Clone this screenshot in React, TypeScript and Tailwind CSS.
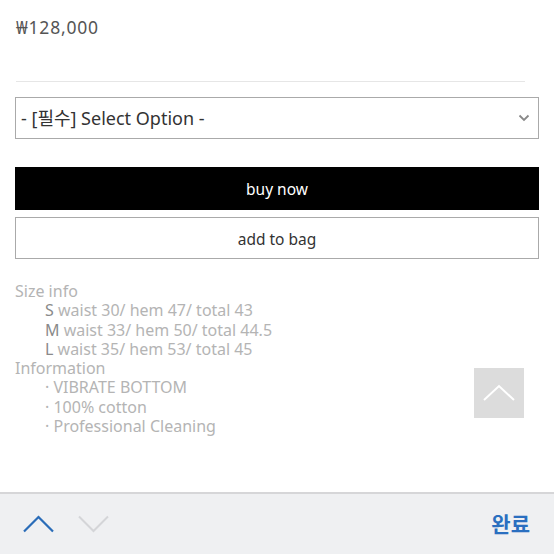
import React from "react";

export default function App() {
  const font = { fontFamily: '"Noto Sans", "Noto Sans CJK KR", sans-serif' };
  return (
    <div className="relative w-[554px] h-[554px] bg-white overflow-hidden flex flex-col" style={font}>
      <div className="flex-1 px-[15px]">
        <div className="pt-[14px] pl-[1px] text-[17.5px] tracking-[0.8px] leading-[26px] text-[#555]">₩128,000</div>
        <div className="mt-[41px] ml-[1px] mr-[14px] h-px bg-[#e6e6e6]" />
        <div className="mt-[15px] h-[42px] border border-[#aaa] flex items-center justify-between pl-[5px] pr-[8px]">
          <span className="text-[18px] text-[#333]">- [필수] Select Option -</span>
          <svg width="12" height="8" viewBox="0 0 12 8" fill="none">
            <path d="M1.5 1.5 L6 6 L10.5 1.5" stroke="#888" strokeWidth="1.8" />
          </svg>
        </div>
        <div className="mt-[28px] h-[43px] bg-black flex items-center justify-center pt-[3px] text-white text-[15.5px]">buy now</div>
        <div className="mt-[7px] h-[42px] border border-[#aaa] flex items-center justify-center pt-[3px] text-[#333] text-[15.5px]">add to bag</div>
        <div className="mt-[23px] text-[16px] leading-[19.3px] text-[#b4b4b4]">
          <div>Size info</div>
          <div className="pl-[30px]"><span className="text-[#8a8a8a]">S</span> waist 30/ hem 47/ total 43</div>
          <div className="pl-[30px]"><span className="text-[#8a8a8a]">M</span> waist 33/ hem 50/ total 44.5</div>
          <div className="pl-[30px]"><span className="text-[#8a8a8a]">L</span> waist 35/ hem 53/ total 45</div>
          <div>Information</div>
          <div className="pl-[30px]">· VIBRATE BOTTOM</div>
          <div className="pl-[30px]">· 100% cotton</div>
          <div className="pl-[30px]">· Professional Cleaning</div>
        </div>
      </div>
      <div className="absolute left-[474px] top-[368px] w-[50px] h-[50px] bg-[#dcdcdc] flex items-center justify-center">
        <svg width="34" height="20" viewBox="0 0 34 20" fill="none">
          <path d="M2 17 L17 3 L32 17" stroke="#fff" strokeWidth="2" />
        </svg>
      </div>
      <div className="h-[62px] border-t-2 border-[#d6d6d8] bg-[#eff0f2] flex items-center pl-[23px] pr-[24px]">
        <svg width="31" height="18" viewBox="0 0 31 18" fill="none">
          <path d="M1 16.5 L15.5 2 L30 16.5" stroke="#2a6cb8" strokeWidth="2.2" />
        </svg>
        <svg className="ml-[24px]" width="31" height="18" viewBox="0 0 31 18" fill="none">
          <path d="M1 1.5 L15.5 16 L30 1.5" stroke="#d4d5d8" strokeWidth="2" />
        </svg>
        <div className="flex-1" />
        <span className="text-[21px] font-bold text-[#2a6fc0]" style={{ fontFamily: '"Noto Sans CJK KR", sans-serif' }}>완료</span>
      </div>
    </div>
  );
}
